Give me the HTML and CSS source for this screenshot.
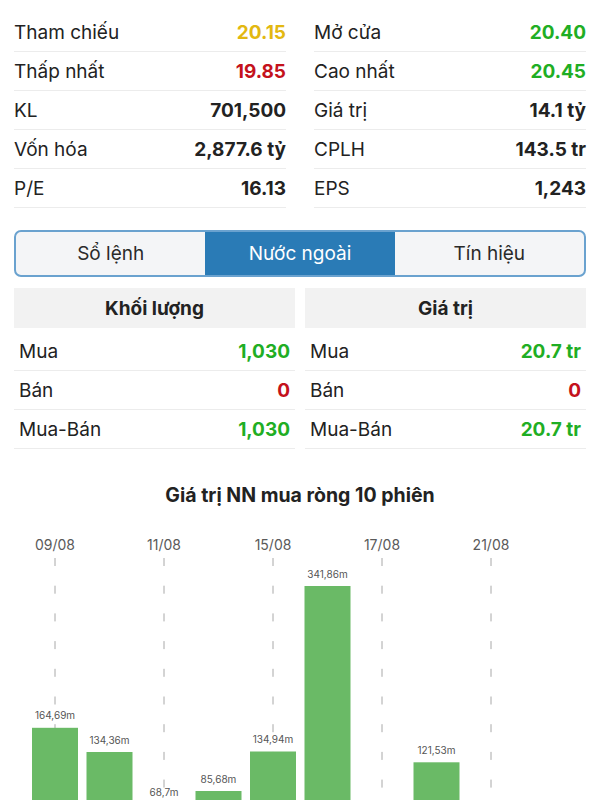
FILE: index.html
```html
<!DOCTYPE html>
<html lang="vi">
    <head>
        <meta charset="UTF-8" />
        <meta name="viewport" content="width=device-width, initial-scale=1.0" />
        <title>Nước ngoài</title>
        <link rel="stylesheet" href="styles.css">
    </head>
    <body>
        <div class="stats">
            <div class="stats-col">
                <div class="stat-row"><span>Tham chiếu</span><b class="ref">20.15</b></div>
                <div class="stat-row"><span>Thấp nhất</span><b class="down">19.85</b></div>
                <div class="stat-row"><span>KL</span><b>701,500</b></div>
                <div class="stat-row"><span>Vốn hóa</span><b>2,877.6 tỷ</b></div>
                <div class="stat-row"><span>P/E</span><b>16.13</b></div>
            </div>
            <div class="stats-col">
                <div class="stat-row"><span>Mở cửa</span><b class="up">20.40</b></div>
                <div class="stat-row"><span>Cao nhất</span><b class="up">20.45</b></div>
                <div class="stat-row"><span>Giá trị</span><b>14.1 tỷ</b></div>
                <div class="stat-row"><span>CPLH</span><b>143.5 tr</b></div>
                <div class="stat-row"><span>EPS</span><b>1,243</b></div>
            </div>
        </div>

        <div class="tabs">
            <div class="tab">Sổ lệnh</div>
            <div class="tab active">Nước ngoài</div>
            <div class="tab">Tín hiệu</div>
        </div>

        <div class="foreign">
            <div class="foreign-col">
                <div class="foreign-head">Khối lượng</div>
                <div class="foreign-row"><span>Mua</span><b class="up">1,030</b></div>
                <div class="foreign-row"><span>Bán</span><b class="down">0</b></div>
                <div class="foreign-row"><span>Mua-Bán</span><b class="up">1,030</b></div>
            </div>
            <div class="foreign-col">
                <div class="foreign-head">Giá trị</div>
                <div class="foreign-row"><span>Mua</span><b class="up">20.7 tr</b></div>
                <div class="foreign-row"><span>Bán</span><b class="down">0</b></div>
                <div class="foreign-row"><span>Mua-Bán</span><b class="up">20.7 tr</b></div>
            </div>
        </div>

        <div class="chart">
            <h3 class="chart-title">Giá trị NN mua ròng 10 phiên</h3>
            <svg class="chart-plot" width="600" height="340" viewBox="0 0 600 340">
                <!-- date grid -->
                <g class="grid">
                    <line x1="55" y1="38" x2="55" y2="340" />
                    <line x1="164" y1="38" x2="164" y2="340" />
                    <line x1="273" y1="38" x2="273" y2="340" />
                    <line x1="382" y1="38" x2="382" y2="340" />
                    <line x1="491" y1="38" x2="491" y2="340" />
                </g>
                <g class="dates">
                    <text x="55" y="30">09/08</text>
                    <text x="164" y="30">11/08</text>
                    <text x="273" y="30">15/08</text>
                    <text x="382" y="30">17/08</text>
                    <text x="491" y="30">21/08</text>
                </g>
                <!-- bars: value * 0.8px, baseline 339.5 -->
                <g class="bars">
                    <rect x="32" y="207.8" width="46" height="131.7" />
                    <rect x="86.5" y="232" width="46" height="107.5" />
                    <rect x="141" y="284.5" width="46" height="55" />
                    <rect x="195.5" y="271" width="46" height="68.5" />
                    <rect x="250" y="231.5" width="46" height="108" />
                    <rect x="304.5" y="66" width="46" height="273.5" />
                    <rect x="413.5" y="242.3" width="46" height="97.2" />
                </g>
                <g class="bar-labels">
                    <text x="55" y="199">164,69m</text>
                    <text x="109.5" y="223.5">134,36m</text>
                    <text x="164" y="276">68,7m</text>
                    <text x="218.5" y="262.5">85,68m</text>
                    <text x="273" y="223">134,94m</text>
                    <text x="327.5" y="57.5">341,86m</text>
                    <text x="436.5" y="234">121,53m</text>
                </g>
            </svg>
        </div>
    </body>
</html>
```

FILE: styles.css
```css
* {
    margin: 0;
    padding: 0;
    box-sizing: border-box;
}

body {
    font-family: Inter, "Noto Sans", sans-serif;
    background-color: #ffffff;
    color: #222222;
    font-size: 19px;
}

b {
    font-weight: 700;
}

.up {
    color: #1fae24;
}

.down {
    color: #c4121c;
}

.ref {
    color: #e3b811;
}

/* summary grid */
.stats {
    display: grid;
    grid-template-columns: 1fr 1fr;
    column-gap: 28px;
    padding: 13px 14px 0;
}

.stat-row {
    display: flex;
    justify-content: space-between;
    align-items: center;
    height: 39px;
    border-bottom: 1px solid #ececec;
}

/* segmented tabs */
.tabs {
    display: grid;
    grid-template-columns: 1fr 1fr 1fr;
    margin: 22px 14px 0;
    height: 47px;
    border: 2px solid #6aa2cf;
    border-radius: 7px;
    overflow: hidden;
    background-color: #f4f5f7;
}

.tab {
    display: flex;
    align-items: center;
    justify-content: center;
    color: #2a2a2a;
}

.tab.active {
    background-color: #2a7bb6;
    color: #ffffff;
}

/* foreign trade table */
.foreign {
    display: grid;
    grid-template-columns: 1fr 1fr;
    column-gap: 10px;
    padding: 11px 14px 0;
}

.foreign-head {
    display: flex;
    align-items: center;
    justify-content: center;
    height: 40px;
    margin-bottom: 4px;
    background-color: #f2f2f2;
    font-weight: 700;
}

.foreign-row {
    display: flex;
    justify-content: space-between;
    align-items: center;
    height: 39px;
    padding: 0 5px;
    border-bottom: 1px solid #ececec;
}

/* chart */
.chart {
    padding-top: 34px;
}

.chart-title {
    text-align: center;
    font-size: 19.5px;
    font-weight: 700;
    line-height: 24px;
    height: 24px;
    margin-bottom: 13px;
}

.chart-plot {
    display: block;
}

.grid line {
    stroke: #a8a8a8;
    stroke-width: 1;
    stroke-dasharray: 8 19.7;
}

.dates text {
    font-size: 14px;
    fill: #5a5a5a;
    text-anchor: middle;
}

.bars rect {
    fill: #6aba66;
}

.bar-labels text {
    font-size: 10px;
    fill: #555555;
    text-anchor: middle;
}
```
